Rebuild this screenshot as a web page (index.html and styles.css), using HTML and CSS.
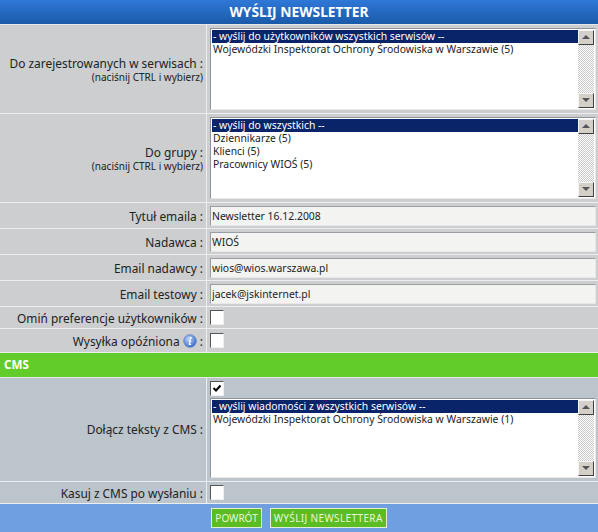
FILE: index.html
```html
<!DOCTYPE html>
<html lang="pl">
<head>
  <meta charset="UTF-8">
  <title>Wyślij newsletter</title>
  <link rel="stylesheet" href="styles.css">
</head>
<body>
  <form class="panel">
    <h1 class="title">WYŚLIJ NEWSLETTER</h1>

    <div class="row row-list">
      <div class="label">Do zarejestrowanych w serwisach :<small>(naciśnij CTRL i wybierz)</small></div>
      <div class="field">
        <div class="listbox">
          <ul class="options">
            <li class="selected">- wyślij do użytkowników wszystkich serwisów --</li>
            <li>Wojewódzki Inspektorat Ochrony Środowiska w Warszawie (5)</li>
          </ul>
          <div class="scrollbar"><span class="arrow up"></span><span class="arrow down"></span></div>
        </div>
      </div>
    </div>

    <div class="row row-list">
      <div class="label">Do grupy :<small>(naciśnij CTRL i wybierz)</small></div>
      <div class="field">
        <div class="listbox">
          <ul class="options">
            <li class="selected">- wyślij do wszystkich --</li>
            <li>Dziennikarze (5)</li>
            <li>Klienci (5)</li>
            <li>Pracownicy WIOŚ (5)</li>
          </ul>
          <div class="scrollbar"><span class="arrow up"></span><span class="arrow down"></span></div>
        </div>
      </div>
    </div>

    <div class="row row-input">
      <div class="label">Tytuł emaila :</div>
      <div class="field"><input class="text" type="text" value="Newsletter 16.12.2008"></div>
    </div>
    <div class="row row-input">
      <div class="label">Nadawca :</div>
      <div class="field"><input class="text" type="text" value="WIOŚ"></div>
    </div>
    <div class="row row-input">
      <div class="label">Email nadawcy :</div>
      <div class="field"><input class="text" type="text" value="wios@wios.warszawa.pl"></div>
    </div>
    <div class="row row-input">
      <div class="label">Email testowy :</div>
      <div class="field"><input class="text" type="text" value="jacek@jskinternet.pl"></div>
    </div>
    <div class="row row-omit">
      <div class="label">Omiń preferencje użytkowników :</div>
      <div class="field"><input class="check" type="checkbox"></div>
    </div>
    <div class="row row-delay">
      <div class="label"><span>Wysyłka opóźniona
        <svg class="info" width="14" height="14" viewBox="0 0 14 14">
          <defs>
            <radialGradient id="infoFill" cx="40%" cy="35%" r="70%">
              <stop offset="0" stop-color="#c4d8f8"/>
              <stop offset="1" stop-color="#2f62c8"/>
            </radialGradient>
          </defs>
          <circle cx="7" cy="7" r="6.3" fill="url(#infoFill)" stroke="#5f86c9" stroke-width="0.8"/>
          <circle cx="7.6" cy="3.9" r="1.1" fill="#fff"/>
          <path d="M6 6.1h2.1l-.9 4h.9v.9H5.6l.8-4H6z" fill="#fff"/>
        </svg> :</span></div>
      <div class="field"><input class="check" type="checkbox"></div>
    </div>

    <h2 class="section">CMS</h2>

    <div class="row row-cms alt">
      <div class="label">Dołącz teksty z CMS :</div>
      <div class="field field-stack">
        <input class="check" type="checkbox" checked>
        <div class="listbox">
          <ul class="options">
            <li class="selected">- wyślij wiadomości z wszystkich serwisów --</li>
            <li>Wojewódzki Inspektorat Ochrony Środowiska w Warszawie (1)</li>
          </ul>
          <div class="scrollbar"><span class="arrow up"></span><span class="arrow down"></span></div>
        </div>
      </div>
    </div>
    <div class="row row-omit alt">
      <div class="label">Kasuj z CMS po wysłaniu :</div>
      <div class="field"><input class="check" type="checkbox"></div>
    </div>

    <div class="actions">
      <button class="btn" type="button">POWRÓT</button>
      <button class="btn btn-send" type="button">WYŚLIJ NEWSLETTERA</button>
    </div>
  </form>
</body>
</html>
```

FILE: styles.css
```css
* {
  box-sizing: border-box;
}

body {
  margin: 0;
  background-color: #6f9fde;
  font-family: 'Noto Sans', sans-serif;
  font-size: 11.9px;
  color: #222;
}

.panel {
  width: 598px;
  height: 532px;
  display: flex;
  flex-direction: column;
}

.title {
  margin: 0;
  height: 25px;
  line-height: 24px;
  text-align: center;
  font-size: 13.8px;
  font-weight: bold;
  color: #fff;
  background-image: linear-gradient(#2f78d8, #1a5aa8);
  border-bottom: 1px solid #e4e8ea;
}

.row {
  display: grid;
  grid-template-columns: 207px 1fr;
  background-color: #ccced0;
  border-bottom: 1px solid #eceeef;
}

.row.alt {
  background-color: #bcc4cc;
}

.row-list {
  height: 89px;
}

.row-input {
  height: 26px;
}

.row-omit {
  height: 22px;
}

.row-delay {
  height: 24px;
}

.row-cms {
  height: 104px;
}

.row-cms .label {
  padding-bottom: 2px;
}

.label {
  display: flex;
  flex-direction: column;
  justify-content: center;
  align-items: flex-end;
  padding-right: 3px;
  text-align: right;
  border-right: 1px solid #eceeef;
  white-space: nowrap;
}

.label small {
  font-size: 10px;
  line-height: 13px;
}

.field {
  display: flex;
  align-items: center;
  padding: 0 3px;
}

.field-stack {
  flex-direction: column;
  align-items: flex-start;
  justify-content: flex-start;
  padding-top: 3px;
}

.listbox {
  display: flex;
  width: 386px;
  height: 82px;
  padding: 1px;
  background-color: #fff;
  border: 1px solid;
  border-color: #8f949a #e8e8e8 #e8e8e8 #8f949a;
}

.field-stack .listbox {
  height: 80px;
  margin-top: 2px;
}

.options {
  flex: 1;
  margin: 0;
  padding: 0;
  list-style: none;
  font-size: 10.4px;
  line-height: 13px;
  white-space: nowrap;
}

.options li {
  padding-left: 1px;
}

.options .selected {
  color: #fff;
  background-color: #0a246a;
}

.scrollbar {
  width: 16px;
  display: flex;
  flex-direction: column;
  justify-content: space-between;
  background-image: repeating-conic-gradient(#fff 0 25%, #c8c8c8 0 50%);
  background-size: 2px 2px;
}

.arrow {
  position: relative;
  display: block;
  width: 16px;
  height: 15px;
  background-color: #d4d0c8;
  border: 1px solid;
  border-color: #f4f4f4 #404040 #404040 #f4f4f4;
}

.arrow::after {
  content: "";
  position: absolute;
  left: 3px;
  top: 4px;
  border-left: 4px solid transparent;
  border-right: 4px solid transparent;
}

.arrow.up::after {
  border-bottom: 4px solid #555;
}

.arrow.down::after {
  border-top: 4px solid #555;
}

.text {
  width: 386px;
  height: 20px;
  padding: 0 1px;
  font: 10.4px 'Noto Sans', sans-serif;
  color: #222;
  background-color: #f3f3f1;
  border: 1px solid;
  border-color: #9a9ea2 #e8e8e8 #e8e8e8 #9a9ea2;
  border-radius: 0;
}

.check {
  appearance: none;
  margin: 0;
  width: 14px;
  height: 15px;
  background-color: #fff;
  border: 1px solid;
  border-color: #555 #eee #eee #555;
  flex-shrink: 0;
}

.check:checked {
  background-image: url("data:image/svg+xml,%3Csvg xmlns='http://www.w3.org/2000/svg' width='12' height='13'%3E%3Cpath d='M2.5 6l2.5 2.5 4.5-5' fill='none' stroke='%23000' stroke-width='2'/%3E%3C/svg%3E");
}

.info {
  vertical-align: -2px;
}

.section {
  margin: 0;
  height: 25px;
  padding-left: 4px;
  line-height: 24px;
  font-size: 11.6px;
  font-weight: bold;
  color: #fff;
  background-color: #62cc2a;
  border-bottom: 1px solid #e4e8ea;
}

.actions {
  flex: 1;
  display: flex;
  justify-content: center;
  align-items: flex-start;
  gap: 8px;
  padding-top: 4px;
}

.btn {
  height: 20px;
  padding: 0 3px;
  font: 10px 'Noto Sans', sans-serif;
  color: #e8f8d8;
  background-color: #5cbc24;
  border: 1px solid #e0f0d0;
  white-space: nowrap;
}

.btn-send {
  letter-spacing: 0.35px;
}
```
